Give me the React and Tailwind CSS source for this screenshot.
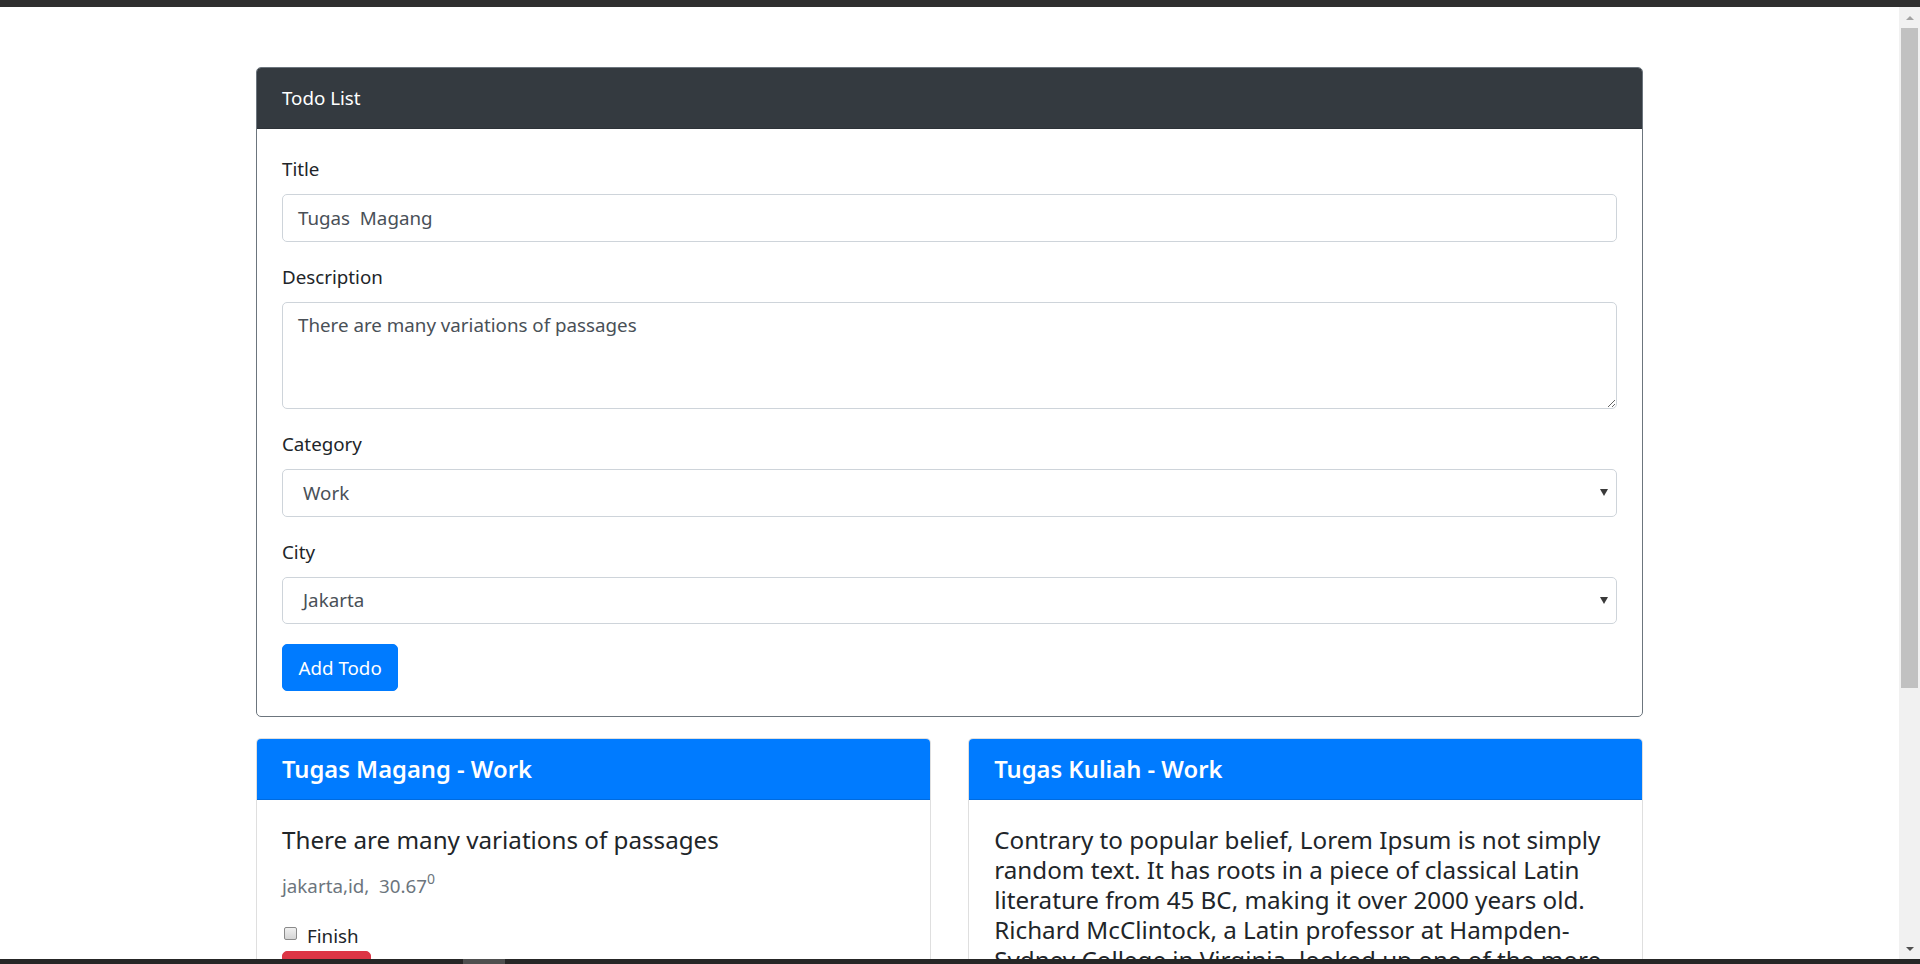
import React from "react";

const labelCls = "block text-[18.75px] leading-[30px] text-[#212529] mb-[10px]";
const ctrlCls =
  "w-full h-[47.5px] border border-[#ced4da] rounded-[5px] text-[18.75px] leading-[30px] text-[#495057] bg-white flex items-center";

function SelectBox({ value }) {
  return (
    <div className={ctrlCls + " pl-[20px] pr-[8px] justify-between"}>
      <span>{value}</span>
      <svg width="8" height="7" viewBox="0 0 8 7" className="shrink-0">
        <path d="M0 0 H8 L4 7 Z" fill="#3a3a3a" />
      </svg>
    </div>
  );
}

function FormCard() {
  return (
    <section className="border border-[#6c757d] rounded-[5px] overflow-hidden bg-white">
      <div className="bg-[#343a40] text-white text-[18.75px] leading-[30px] px-[25px] py-[15px] border-b border-[rgba(0,0,0,0.125)]">
        Todo List
      </div>
      <div className="p-[25px]">
        <div className="mb-[20px]">
          <label className={labelCls}>Title</label>
          <div className={ctrlCls + " px-[15px]"}>Tugas&nbsp; Magang</div>
        </div>
        <div className="mb-[20px]">
          <label className={labelCls}>Description</label>
          <textarea
            readOnly
            rows={3}
            defaultValue="There are many variations of passages"
            className="block w-full h-[107.5px] border border-[#ced4da] rounded-[5px] px-[15px] py-[7.5px] text-[18.75px] leading-[30px] text-[#495057] bg-white outline-none"
          />
        </div>
        <div className="mb-[20px]">
          <label className={labelCls}>Category</label>
          <SelectBox value="Work" />
        </div>
        <div className="mb-[20px]">
          <label className={labelCls}>City</label>
          <SelectBox value="Jakarta" />
        </div>
        <button className="bg-[#007bff] border border-[#007bff] text-white text-[18.75px] leading-[30px] px-[15.5px] py-[7.5px] rounded-[5px]">
          Add Todo
        </button>
      </div>
    </section>
  );
}

function TodoCard({ title, children }) {
  return (
    <div className="border border-[rgba(0,0,0,0.125)] rounded-[5px] overflow-hidden bg-white">
      <div className="bg-[#007bff] text-white text-[23.75px] leading-[30px] font-semibold px-[25px] py-[15px] border-b border-[rgba(0,0,0,0.125)]">
        {title}
      </div>
      <div className="p-[25px]">{children}</div>
    </div>
  );
}

export default function App() {
  return (
    <div className="w-[1920px] h-[964px] overflow-hidden flex flex-col bg-white font-['Segoe_UI','Noto_Sans','Open_Sans',sans-serif]">
      <div className="h-[7px] shrink-0 bg-[#2f2f2f]" />
      <div className="flex flex-1 min-h-0">
        <main className="flex-1 min-w-0 overflow-hidden">
          <div className="w-[1387px] mx-auto pt-[60px]">
            <FormCard />
            <div className="mt-[21px] grid grid-cols-2 gap-x-[37.5px]">
              <TodoCard title="Tugas Magang - Work">
                <h5 className="text-[24.2px] leading-[30px] text-[#212529] mb-[16px]">
                  There are many variations of passages
                </h5>
                <p className="text-[18.75px] leading-[30px] text-[#6c757d] mb-[20px]">
                  jakarta,id,&nbsp; 30.67
                  <sup className="text-[14px] relative -top-[9px]">0</sup>
                </p>
                <div className="flex items-start h-[30px]">
                  <span className="mt-[6px] ml-[1.5px] mr-[10.5px] w-[13px] h-[13px] rounded-[2px] border border-[#8a8a8a] bg-gradient-to-b from-[#f0f0f0] to-[#d4d4d4]" />
                  <span className="text-[18.75px] leading-[30px] text-[#212529]">Finish</span>
                </div>
                <button className="bg-[#dc3545] border border-[#dc3545] text-white text-[18.75px] leading-[30px] px-[15px] py-[7.5px] rounded-[5px]">
                  Delete
                </button>
              </TodoCard>
              <TodoCard title="Tugas Kuliah - Work">
                <p className="text-[24.2px] leading-[30px] text-[#212529] whitespace-nowrap">
                  Contrary to popular belief, Lorem Ipsum is not simply
                  <br />
                  random text. It has roots in a piece of classical Latin
                  <br />
                  literature from 45 BC, making it over 2000 years old.
                  <br />
                  Richard McClintock, a Latin professor at Hampden-
                  <br />
                  Sydney College in Virginia, looked up one of the more
                  <br />
                  obscure Latin words, consectetur, from a Lorem Ipsum
                </p>
              </TodoCard>
            </div>
          </div>
        </main>
        <div className="w-[21px] shrink-0 bg-[#f1f1f1] flex flex-col">
          <div className="h-[21px] flex items-center justify-center">
            <svg width="8" height="4" viewBox="0 0 8 4">
              <path d="M0 4 L4 0 L8 4 Z" fill="#a3a3a3" />
            </svg>
          </div>
          <div className="h-[660px] mx-[2px] bg-[#c1c1c1]" />
          <div className="flex-1" />
          <div className="h-[21px] flex items-center justify-center">
            <svg width="8" height="4" viewBox="0 0 8 4">
              <path d="M0 0 L8 0 L4 4 Z" fill="#505050" />
            </svg>
          </div>
        </div>
      </div>
      <div className="h-[5px] shrink-0 bg-[#262626] flex">
        <div className="ml-[463px] w-[42px] bg-[#4f4f4f]" />
      </div>
    </div>
  );
}
